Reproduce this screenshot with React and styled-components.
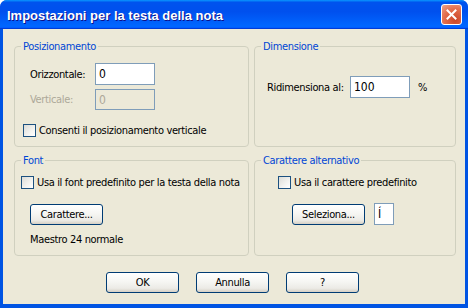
import React from 'react';
import styled, { createGlobalStyle } from 'styled-components';

const GlobalStyle = createGlobalStyle`
	html, body {
		margin: 0;
		padding: 0;
		background: #ffffff;
	}
	* {
		box-sizing: border-box;
	}
`;

const Window = styled.div`
	width: 468px;
	height: 308px;
	display: flex;
	flex-direction: column;
	border-radius: 7px 7px 0 0;
	overflow: hidden;
	background: #0054e3;
	font-family: 'DejaVu Sans Condensed', 'DejaVu Sans', sans-serif;
	font-size: 11px;
	letter-spacing: -0.35px;
	color: #000;
	white-space: nowrap;
`;

const TitleBar = styled.div`
	height: 29px;
	flex-shrink: 0;
	display: flex;
	align-items: center;
	justify-content: space-between;
	padding: 0 6px 0 7px;
	background: linear-gradient(
		180deg,
		#0997ff,
		#0053ee 8%,
		#0050ee 40%,
		#0066ff 88%,
		#0066ff 93%,
		#005bff 95%,
		#003dd7 96%,
		#003dd7
	);
`;

const Title = styled.span`
	color: #fff;
	font-family: 'Liberation Sans', Arial, sans-serif;
	font-weight: bold;
	font-size: 13px;
	letter-spacing: 0;
	text-shadow: 1px 1px #0f1089;
	padding-top: 1px;
`;

const CloseButton = styled.div`
	width: 21px;
	height: 21px;
	border: 1px solid #fff;
	border-radius: 3px;
	background: radial-gradient(circle at 70% 80%, #cc4628 0%, #e26d4c 55%, #f0a48a 100%);
	display: flex;
	align-items: center;
	justify-content: center;
`;

const Body = styled.div`
	flex: 1;
	margin: 0 3px 4px;
	background: #ece9d8;
	padding: 11px 9px 0 11px;
	display: flex;
	flex-direction: column;
`;

const Groups = styled.div`
	display: grid;
	grid-template-columns: 235px 202px;
	grid-template-rows: 107px 102px;
	column-gap: 5px;
	row-gap: 7px;
`;

const Group = styled.fieldset`
	margin: 0;
	padding: 0;
	min-width: 0;
	border: 1px solid #d0d0bf;
	border-radius: 4px;
`;

const Legend = styled.legend`
	margin-left: 6px;
	padding: 0 2px;
	color: #0046d5;
	line-height: 13px;
`;

const Content = styled.div`
	display: flex;
	flex-direction: column;
	padding: ${(p) => p.$pad};
`;

const FieldRow = styled.div`
	display: flex;
	align-items: center;
	margin: ${(p) => p.$margin || '0'};
`;

const Label = styled.span`
	width: ${(p) => p.$width}px;
	flex-shrink: 0;
	color: ${(p) => (p.$disabled ? '#aca899' : '#000')};
`;

const TextBox = styled.div`
	width: ${(p) => p.$width || 60}px;
	height: ${(p) => p.$height || 22}px;
	border: 1px solid #7f9db9;
	background: ${(p) => (p.$disabled ? '#ece9d8' : '#fff')};
	color: ${(p) => (p.$disabled ? '#aca899' : '#000')};
	padding-left: 3px;
	display: flex;
	align-items: center;
	font-size: 12px;
	letter-spacing: 0;
`;

const Unit = styled.span`
	margin-left: 8px;
`;

const CheckRow = styled.label`
	display: flex;
	align-items: center;
	gap: 3px;
	margin: ${(p) => p.$margin || '0'};
`;

const CheckBox = styled.span`
	width: 13px;
	height: 13px;
	flex-shrink: 0;
	border: 1px solid #1c5180;
	background: linear-gradient(135deg, #dcdcd7 0%, #f3f3f0 60%, #ffffff 100%);
`;

const Button = styled.div`
	width: 73px;
	height: 21px;
	flex-shrink: 0;
	border: 1px solid #003c74;
	border-radius: 3px;
	background: linear-gradient(180deg, #ffffff 0%, #f6f6f3 45%, #ecebe6 80%, #d6d0c5 100%);
	display: flex;
	align-items: center;
	justify-content: center;
`;

const ButtonRow = styled.div`
	display: flex;
	gap: ${(p) => p.$gap || 0}px;
	align-items: center;
	margin: ${(p) => p.$margin || '0'};
`;

const Note = styled.div`
	line-height: 13px;
	margin: ${(p) => p.$margin || '0'};
`;

const Footer = styled.div`
	display: flex;
	gap: 17px;
	padding: 16px 0 0 92px;
`;

const CloseIcon = () => (
	<svg width='11' height='11' viewBox='0 0 11 11'>
		<path d='M1.5 1.5 L9.5 9.5 M9.5 1.5 L1.5 9.5' stroke='#fff' strokeWidth='2' strokeLinecap='square' />
	</svg>
);

const App = () => {
	return (
		<>
			<GlobalStyle />
			<Window>
				<TitleBar>
					<Title>Impostazioni per la testa della nota</Title>
					<CloseButton>
						<CloseIcon />
					</CloseButton>
				</TitleBar>
				<Body>
					<Groups>
						<Group>
							<Legend>Posizionamento</Legend>
							<Content $pad='10px 0 0 8px'>
								<FieldRow $margin='0 0 0 7px'>
									<Label $width={65}>Orizzontale:</Label>
									<TextBox>0</TextBox>
								</FieldRow>
								<FieldRow $margin='4px 0 0 7px'>
									<Label $width={65} $disabled>
										Verticale:
									</Label>
									<TextBox $disabled $height={21}>
										0
									</TextBox>
								</FieldRow>
								<CheckRow $margin='14px 0 0'>
									<CheckBox />
									Consenti il posizionamento verticale
								</CheckRow>
							</Content>
						</Group>
						<Group>
							<Legend>Dimensione</Legend>
							<Content $pad='23px 0 0 12px'>
								<FieldRow>
									<Label $width={83}>Ridimensiona al:</Label>
									<TextBox>100</TextBox>
									<Unit>%</Unit>
								</FieldRow>
							</Content>
						</Group>
						<Group>
							<Legend>Font</Legend>
							<Content $pad='9px 0 0 6px'>
								<CheckRow>
									<CheckBox />
									Usa il font predefinito per la testa della nota
								</CheckRow>
								<ButtonRow $margin='15px 0 0 9px'>
									<Button>Carattere...</Button>
								</ButtonRow>
								<Note $margin='8px 0 0 9px'>Maestro 24 normale</Note>
							</Content>
						</Group>
						<Group>
							<Legend>Carattere alternativo</Legend>
							<Content $pad='9px 0 0 23px'>
								<CheckRow>
									<CheckBox />
									Usa il carattere predefinito
								</CheckRow>
								<ButtonRow $gap={9} $margin='14px 0 0 14px'>
									<Button>Seleziona...</Button>
									<TextBox $width={20} $height={22}>
										Í
									</TextBox>
								</ButtonRow>
							</Content>
						</Group>
					</Groups>
					<Footer>
						<Button>OK</Button>
						<Button>Annulla</Button>
						<Button>?</Button>
					</Footer>
				</Body>
			</Window>
		</>
	);
};

export default App;
